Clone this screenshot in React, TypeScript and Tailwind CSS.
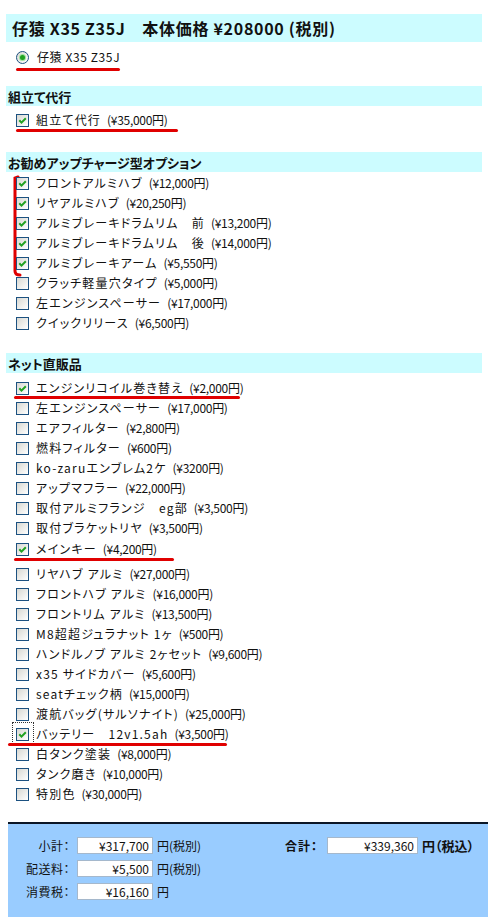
import React from "react";

function Box({ checked }: { checked?: boolean }) {
  return (
    <span className="relative inline-block w-[13px] h-[13px] shrink-0 border border-[#1c5180] bg-linear-to-br from-[#d8d8d2] to-white">
      {checked && (
        <svg className="absolute left-0 top-0" width="11" height="11" viewBox="0 0 11 11">
          <path d="M2.3 5.3 L4.5 7.6 L8.8 3.2" fill="none" stroke="#21a121" strokeWidth="2" />
        </svg>
      )}
    </span>
  );
}

function Radio() {
  return (
    <span className="relative inline-flex items-center justify-center w-[13px] h-[13px] shrink-0 rounded-full border border-[#1c5180] bg-linear-to-br from-[#d8d8d2] to-white">
      <span className="w-[5px] h-[5px] rounded-full bg-[#21a121] shadow-[0_0_0_1px_#9ee29e]" />
    </span>
  );
}

function Label({ text }: { text: string }) {
  const i = text.lastIndexOf("（");
  const name = text.slice(0, i);
  const price = "(" + text.slice(i + 1).replace("）", ")");
  return (
    <span className="whitespace-nowrap flex items-center">
      <span className="tracking-[1.2px]">{name}</span>
      <span className="ml-[6px] tracking-[-0.3px]">{price}</span>
    </span>
  );
}

type RowProps = { label: string; checked?: boolean; line?: string; cls?: string; focus?: boolean };

function Row({ label, checked, line, cls, focus }: RowProps) {
  return (
    <div className={"relative flex items-center h-[20px] pl-[16px] gap-[7px] " + (cls ?? "")}>
      {focus ? (
        <span className="absolute left-[12px] top-[-2px] w-[22px] h-[22px] border border-dotted border-[#333]" />
      ) : null}
      <Box checked={checked} />
      <Label text={label} />
      {line ? <span className={"absolute h-[3px] bg-[#e00000] rounded-full " + line} /> : null}
    </div>
  );
}

function Head({ children, cls }: { children: React.ReactNode; cls?: string }) {
  return (
    <div className={"mx-[6px] bg-[#ccfcff] flex items-center font-bold " + (cls ?? "")}>{children}</div>
  );
}

export default function App() {
  return (
    <div className="relative w-[488px] h-[919px] bg-white text-[#111] text-[12px] leading-none font-['Noto_Sans_CJK_JP','Noto_Sans_JP',sans-serif] [font-feature-settings:'palt'] overflow-hidden">
      <div className="h-[14px]" />
      <Head cls="h-[28px] pl-[6px] text-[16px] tracking-[0.7px]">仔猿 X35 Z35J　本体価格 ¥208000 (税別)</Head>

      <div className="relative flex items-center h-[20px] mt-[5px] pl-[16px] gap-[8px]">
        <Radio />
        <span className="tracking-[0.6px]">仔猿 X35 Z35J</span>
        <span className="absolute left-[16px] top-[21px] w-[104px] h-[3px] bg-[#e00000] rounded-full" />
      </div>

      <Head cls="h-[20px] mt-[19px] pl-[2px] text-[13px]">組立て代行</Head>
      <Row cls="mt-[4px]" checked label="組立て代行（¥35,000円）" line="left-[16px] top-[19px] w-[162px]" />

      <Head cls="h-[20px] mt-[22px] pl-[2px] text-[13px]">お勧めアップチャージ型オプション</Head>
      <div className="relative mt-[1px]">
        <svg className="absolute left-[11px] top-[2px]" width="12" height="104" viewBox="0 0 12 104">
          <path d="M7 2 L4 3 L4 96 Q4 100 9 100" fill="none" stroke="#e00000" strokeWidth="3" strokeLinecap="round" />
        </svg>
        <Row checked label="フロントアルミハブ（¥12,000円）" />
        <Row checked label="リヤアルミハブ（¥20,250円）" />
        <Row checked label="アルミブレーキドラムリム　前（¥13,200円）" />
        <Row checked label="アルミブレーキドラムリム　後（¥14,000円）" />
        <Row checked label="アルミブレーキアーム（¥5,550円）" />
        <Row label="クラッチ軽量穴タイプ（¥5,000円）" />
        <Row label="左エンジンスペーサー（¥17,000円）" />
        <Row label="クイックリリース（¥6,500円）" />
      </div>

      <Head cls="h-[20px] mt-[20px] pl-[2px] text-[13px]">ネット直販品</Head>
      <div className="mt-[5px]">
        <Row checked label="エンジンリコイル巻き替え（¥2,000円）" line="left-[14px] top-[18px] w-[226px]" />
        <Row label="左エンジンスペーサー（¥17,000円）" />
        <Row label="エアフィルター（¥2,800円）" />
        <Row label="燃料フィルター（¥600円）" />
        <Row label="ko-zaruエンブレム2ケ（¥3200円）" />
        <Row label="アップマフラー（¥22,000円）" />
        <Row label="取付アルミフランジ　eg部（¥3,500円）" />
        <Row label="取付ブラケットリヤ（¥3,500円）" />
        <Row cls="mt-[1px]" checked label="メインキー（¥4,200円）" line="left-[14px] top-[19px] w-[160px]" />
        <Row cls="mt-[5px]" label="リヤハブ アルミ（¥27,000円）" />
        <Row label="フロントハブ アルミ（¥16,000円）" />
        <Row label="フロントリム アルミ（¥13,500円）" />
        <Row label="M8超超ジュラナット 1ヶ（¥500円）" />
        <Row label="ハンドルノブ アルミ 2ヶセット（¥9,600円）" />
        <Row label="x35 サイドカバー（¥5,600円）" />
        <Row label="seatチェック柄（¥15,000円）" />
        <Row label="渡航バッグ(サルソナイト)（¥25,000円）" />
        <Row checked focus label="バッテリー　12v1.5ah（¥3,500円）" line="left-[8px] top-[19px] w-[219px]" />
        <Row label="白タンク塗装（¥8,000円）" />
        <Row label="タンク磨き（¥10,000円）" />
        <Row label="特別色（¥30,000円）" />
      </div>

      <div className="mt-[18px] ml-[8px] h-[95px] border-t-[2px] border-[#0b1626] bg-[#99ccff] flex pt-[10px]">
        <div className="flex flex-col">
          {[
            ["小計：", "¥317,700", "円(税別)"],
            ["配送料：", "¥5,500", "円(税別)"],
            ["消費税：", "¥16,160", "円"],
          ].map(([a, b, c]) => (
            <div key={a} className="flex items-center h-[23px]">
              <span className="w-[63px] text-right pr-[1px] tracking-[0.5px]">{a}</span>
              <span className="ml-[6px] w-[76px] h-[17px] bg-white border border-[#a5b8cc] flex items-center justify-end pr-[3px]">{b}</span>
              <span className="ml-[4px]">{c}</span>
            </div>
          ))}
        </div>
        <div className="ml-auto mr-[14px] flex items-start">
          <div className="flex items-center h-[23px] font-bold">
            <span className="tracking-[1px]">合計：</span>
            <span className="ml-[9px] w-[91px] h-[17px] bg-white border border-[#a5b8cc] flex items-center justify-end pr-[3px] font-normal">¥339,360</span>
            <span className="ml-[4px] text-[13px]">円（税込）</span>
          </div>
        </div>
      </div>
    </div>
  );
}
